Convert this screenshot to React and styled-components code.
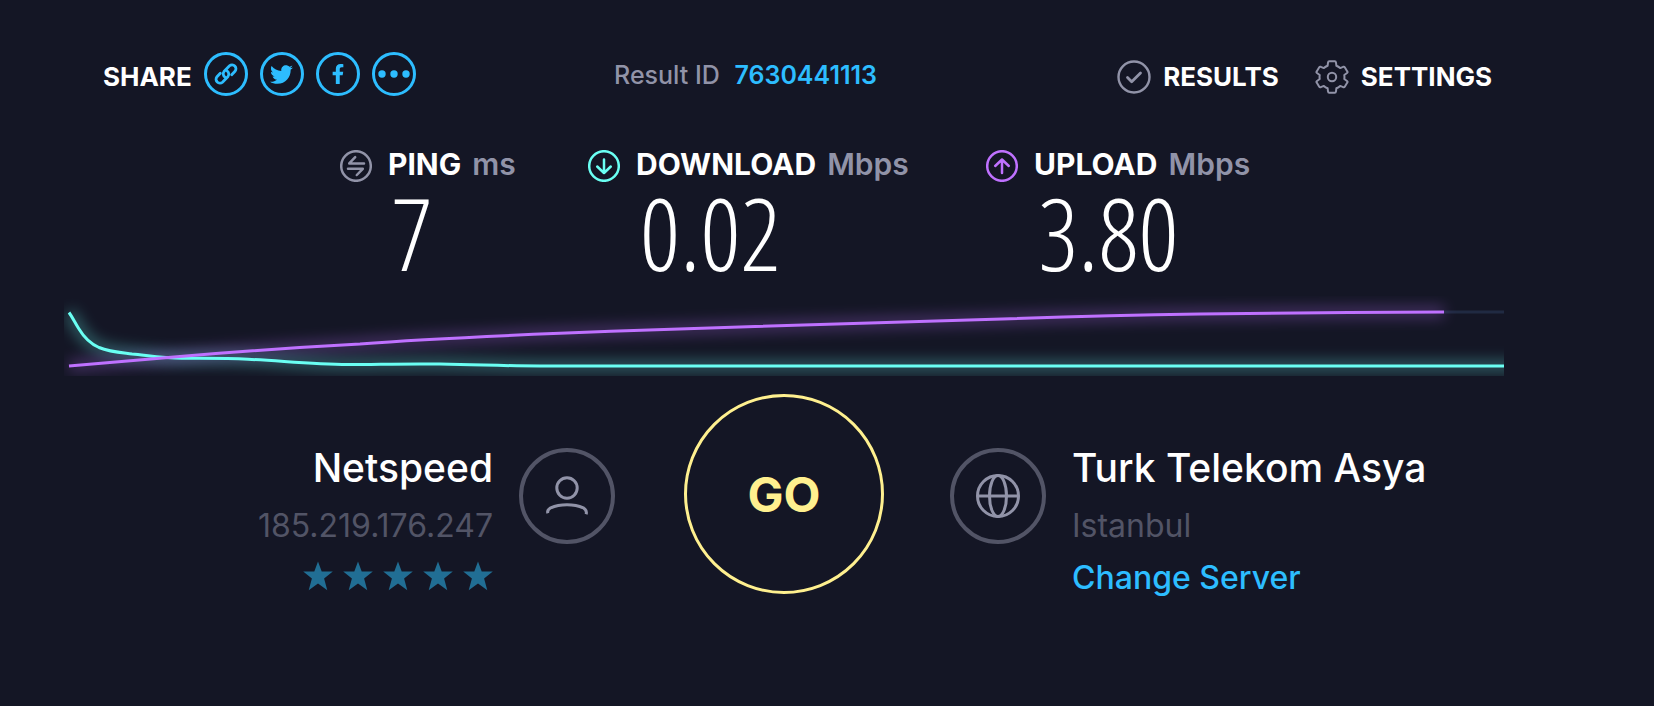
import styled, { createGlobalStyle } from "styled-components";
import { FaTwitter, FaFacebookF } from "react-icons/fa";

const App = () => {
    return (
        <>
            <GlobalStyle />
            <Container>
                <TopBar>
                    <Share>
                        <ShareLabel>SHARE</ShareLabel>
                        <ShareButton aria-label="Copy link">
                            <LinkIcon />
                        </ShareButton>
                        <ShareButton aria-label="Twitter">
                            <FaTwitter size={23} />
                        </ShareButton>
                        <ShareButton aria-label="Facebook">
                            <FaFacebookF size={20} />
                        </ShareButton>
                        <ShareButton aria-label="More">
                            <DotsIcon />
                        </ShareButton>
                    </Share>
                    <ResultId>
                        Result ID <a href="#result">7630441113</a>
                    </ResultId>
                    <Nav>
                        <NavLink href="#results">
                            <CheckIcon />
                            RESULTS
                        </NavLink>
                        <NavLink href="#settings">
                            <GearIcon />
                            SETTINGS
                        </NavLink>
                    </Nav>
                </TopBar>

                <Metrics>
                    {metrics.map(({ name, unit, value, color, Icon }) => (
                        <Metric key={name}>
                            <MetricIcon $color={color}>
                                <Icon />
                            </MetricIcon>
                            <MetricName>
                                {name} <Unit>{unit}</Unit>
                            </MetricName>
                            <MetricValue>{value}</MetricValue>
                        </Metric>
                    ))}
                </Metrics>

                <SpeedChart />

                <Bottom>
                    <Side $end>
                        <Details $end>
                            <Name>Netspeed</Name>
                            <Muted>185.219.176.247</Muted>
                            <Stars role="img" aria-label="5 stars">
                                {[1, 2, 3, 4, 5].map((n) => (
                                    <Star key={n} />
                                ))}
                            </Stars>
                        </Details>
                        <Badge>
                            <UserIcon />
                        </Badge>
                    </Side>
                    <GoButton>GO</GoButton>
                    <Side>
                        <Badge>
                            <GlobeIcon />
                        </Badge>
                        <Details>
                            <Name>Turk Telekom Asya</Name>
                            <Muted>Istanbul</Muted>
                            <ChangeServer href="#servers">Change Server</ChangeServer>
                        </Details>
                    </Side>
                </Bottom>
            </Container>
        </>
    );
};

// icons
const LinkIcon = () => (
    <svg width="24" height="24" viewBox="0 0 24 24" fill="none" stroke="currentColor" strokeWidth="2.8" strokeLinecap="round">
        <path d="M11 15.200a4 4 0 0 1-1-5.700l5.500-5.700a3.900 3.900 0 0 1 5.500 5.500l-3.300 3.400" />
        <path d="M13 8.800a4 4 0 0 1 1 5.700l-5.500 5.700a3.900 3.900 0 0 1-5.500-5.500l3.300-3.400" />
    </svg>
);

const DotsIcon = () => (
    <svg width="32" height="8" viewBox="0 0 32 8" fill="currentColor">
        <circle cx="4" cy="4" r="3.700" />
        <circle cx="16" cy="4" r="3.700" />
        <circle cx="28" cy="4" r="3.700" />
    </svg>
);

const CheckIcon = () => (
    <svg width="34" height="34" viewBox="0 0 34 34" fill="none" stroke="#9193a8" strokeWidth="2.400" strokeLinecap="round" strokeLinejoin="round">
        <circle cx="17" cy="17" r="15.500" />
        <path d="M10.500 17.500l4.200 4.200 8.800-8.600" strokeWidth="2.800" />
    </svg>
);

const GearIcon = () => (
    <svg width="34" height="34" viewBox="0 0 34 34" fill="none" stroke="#9193a8" strokeWidth="2" strokeLinejoin="round">
        <circle cx="17" cy="17" r="4.200" />
        <path d="M14.200 1.200H19.800Q20.800 1.200 21 2.700L21.400 5.800Q23.600 6.700 25.100 8.100L28.200 6.800Q29.300 6.400 29.900 7.400L32.300 11.400Q32.900 12.300 32 13L29.300 15Q29.600 17 29.300 19L32 21Q32.900 21.700 32.300 22.600L29.900 26.600Q29.300 27.600 28.200 27.200L25.100 25.900Q23.600 27.300 21.400 28.200L21 31.300Q20.800 32.800 19.800 32.800H14.200Q13.200 32.800 13 31.300L12.600 28.200Q10.400 27.300 8.900 25.900L5.800 27.200Q4.700 27.600 4.100 26.600L1.700 22.600Q1.100 21.700 2 21L4.700 19Q4.400 17 4.700 15L2 13Q1.100 12.300 1.700 11.400L4.100 7.400Q4.700 6.400 5.800 6.800L8.900 8.100Q10.400 6.700 12.600 5.800L13 2.700Q13.200 1.200 14.200 1.200Z" />
    </svg>
);

const PingIcon = () => (
    <svg width="32" height="32" viewBox="0 0 32 32">
        <circle cx="16" cy="16" r="14.800" />
        <path d="M24 13.400H9.200L15.200 7.200M8 18.800H22.800L16.800 25" />
    </svg>
);

const DownIcon = () => (
    <svg width="32" height="32" viewBox="0 0 32 32">
        <circle cx="16" cy="16" r="14.800" />
        <path d="M16 9.500V23M9.200 16.500L16 23l6.800-6.500" />
    </svg>
);

const UpIcon = () => (
    <svg width="32" height="32" viewBox="0 0 32 32">
        <circle cx="16" cy="16" r="14.800" />
        <path d="M16 23V9.500M9.200 16L16 9.500l6.800 6.500" />
    </svg>
);

const UserIcon = () => (
    <svg width="42" height="42" viewBox="0 0 42 42" fill="none" stroke="#9193a8" strokeWidth="3">
        <circle cx="21" cy="13" r="10.200" />
        <path d="M1.900 38.300C1 36 2.200 34.300 4.700 32.800C14 28.600 28 28.600 37.300 32.800C40 34.500 41 36.500 40.100 39.300" />
    </svg>
);

const GlobeIcon = () => (
    <svg width="44" height="44" viewBox="0 0 44 44" fill="none" stroke="#9193a8" strokeWidth="3">
        <circle cx="22" cy="22" r="20.500" />
        <ellipse cx="22" cy="22" rx="8.500" ry="20.500" />
        <path d="M1 22H43" />
    </svg>
);

const Star = () => (
    <svg width="30" height="30" viewBox="0 0 30 30" fill="#216e94">
        <path d="M15 .5l3.700 9.900 11.100.2-8.700 6.800 3.200 11.900L15 22.600l-9.300 6.700 3.200-11.900L.2 10.600l11.100-.2z" />
    </svg>
);

const downloadPath =
    "M5 16.500C9 22 11 27 15 33C21 43 27 48 35 51.500C46 56 56 56.500 68 58C84 59.500 98 62 118 62.300C140 62.500 160 62 184 63.300C219 65 249 68.500 284 68.500C314 68.500 336 67.500 376 68C416 68.500 436 70 476 70H1440";
const uploadPath =
    "M5 70L113 60.700C180 55 240 51 296 48C360 43 430 40 496 37.300C560 34.500 620 32.500 691 30.500C780 28 860 25 938 23C1010 20.500 1070 19 1136 18C1210 17 1300 16.500 1380 16";

// the glow is cut off at the svg edge on purpose
const SpeedChart = () => (
    <Chart viewBox="0 0 1440 80" preserveAspectRatio="none" role="img" aria-label="Download and upload speed">
        <defs>
            <filter id="glow" filterUnits="userSpaceOnUse" x="-60" y="-40" width="1560" height="180">
                <feGaussianBlur stdDeviation="7" />
            </filter>
        </defs>
        <path d="M1380 16H1440" stroke="#202a42" strokeWidth="3" />
        <path d={`${downloadPath}H1500`} stroke="#6afff3" strokeWidth="12" opacity=".3" filter="url(#glow)" />
        <path d={uploadPath} stroke="#bf71ff" strokeWidth="12" opacity=".28" filter="url(#glow)" />
        <path d={downloadPath} stroke="#6afff3" strokeWidth="3" />
        <path d={uploadPath} stroke="#bf71ff" strokeWidth="3" />
    </Chart>
);

const metrics = [
    { name: "PING", unit: "ms", value: "7", color: "#9193a8", Icon: PingIcon },
    { name: "DOWNLOAD", unit: "Mbps", value: "0.02", color: "#6afff3", Icon: DownIcon },
    { name: "UPLOAD", unit: "Mbps", value: "3.80", color: "#bf71ff", Icon: UpIcon },
];

const GlobalStyle = createGlobalStyle`
    * {
        box-sizing: border-box;
    }
    body {
        margin: 0;
        background: #141625;
        color: #fff;
        font-family: Inter, "Liberation Sans", sans-serif;
    }
    a {
        color: #2dbdff;
        text-decoration: none;
    }
    button {
        padding: 0;
        background: none;
        font-family: inherit;
        cursor: pointer;
    }
    svg {
        display: block;
        flex-shrink: 0;
    }
`;

const Container = styled.main`
    min-height: 100vh;
    padding: 52px 150px 40px 64px; //room on the right is wider
`;

const TopBar = styled.header`
    display: grid;
    grid-template-columns: 512fr 504fr auto;
    align-items: start;
    padding: 0 12px 0 39px;
    white-space: nowrap;
`;

const Share = styled.div`
    display: flex;
    align-items: flex-start;
    gap: 12px;
`;

const ShareLabel = styled.span`
    font-size: 26px;
    line-height: 50px;
    font-weight: 700;
`;

const ShareButton = styled.button`
    display: flex;
    align-items: center;
    justify-content: center;
    width: 44px;
    height: 44px;
    border: 3px solid #2dbdff;
    border-radius: 50%;
    color: #2dbdff;
`;

const ResultId = styled.div`
    font-size: 25px;
    line-height: 46px;
    font-weight: 500;
    color: #9193a8;

    a {
        margin-left: 8px;
        font-weight: 600;
    }
`;

const Nav = styled.nav`
    display: flex;
    gap: 36px;
`;

const NavLink = styled.a`
    display: flex;
    align-items: center;
    gap: 12px;
    color: #fff;
    font-size: 26px;
    line-height: 50px;
    font-weight: 700;
`;

const Metrics = styled.section`
    display: grid;
    grid-template-columns: 248px 398px 264px;
    justify-content: center;
    margin-top: 42px;
    padding-left: 22px;
    white-space: nowrap;
`;

const Metric = styled.div`
    display: grid;
    grid-template-columns: 32px auto;
    justify-content: start;
    column-gap: 16px;
`;

const MetricIcon = styled.span`
    padding-top: 6px;
    color: ${(props) => props.$color};

    svg {
        fill: none;
        stroke: currentColor;
        stroke-width: 2.5;
        stroke-linecap: round;
        stroke-linejoin: round;
    }
`;

const MetricName = styled.h2`
    margin: 0;
    font-size: 30px;
    line-height: 40px;
    font-weight: 700;
`;

const Unit = styled.span`
    margin-left: 4px;
    color: #9193a8;
    font-weight: 600;
`;

const MetricValue = styled.div`
    grid-column: 2;
    padding-left: 4px;
    font-family: "Open Sans Condensed Light", "Open Sans Condensed", "Roboto Condensed", sans-serif;
    font-size: 100px;
    line-height: 96px;
    font-weight: 300;
`;

const Chart = styled.svg`
    width: 100%;
    height: 80px;
    margin-top: 16px;
    fill: none;
`;

const Bottom = styled.section`
    display: grid;
    grid-template-columns: 1fr 200px 1fr;
    column-gap: 66px;
    margin-top: 18px;
`;

const Side = styled.div`
    display: flex;
    align-items: flex-start;
    justify-content: ${(props) => (props.$end ? "flex-end" : "flex-start")};
    gap: 26px;
    padding-top: 48px;
    padding-right: ${(props) => (props.$end ? "3px" : "0")};
`;

const Details = styled.div`
    display: flex;
    flex-direction: column;
    align-items: ${(props) => (props.$end ? "flex-end" : "flex-start")};
    white-space: nowrap;
`;

const Name = styled.div`
    margin-bottom: 6px;
    font-size: 39px;
    line-height: 52px;
    font-weight: 500;
`;

const Muted = styled.div`
    font-size: 32px;
    line-height: 52px;
    color: #525466;
`;

const ChangeServer = styled.a`
    font-size: 32px;
    line-height: 52px;
    font-weight: 500;
`;

const Stars = styled.div`
    display: flex;
    align-items: center;
    gap: 10px;
    height: 48px;
`;

const Badge = styled.div`
    display: flex;
    align-items: center;
    justify-content: center;
    flex-shrink: 0;
    width: 96px;
    height: 96px;
    margin-top: 6px;
    border: 4px solid #525466;
    border-radius: 50%;
`;

const GoButton = styled.button`
    width: 200px;
    height: 200px;
    border: 3px solid #fff08f;
    border-radius: 50%;
    color: #fff08f;
    font-size: 48px;
    font-weight: 700;
`;

export default App;
